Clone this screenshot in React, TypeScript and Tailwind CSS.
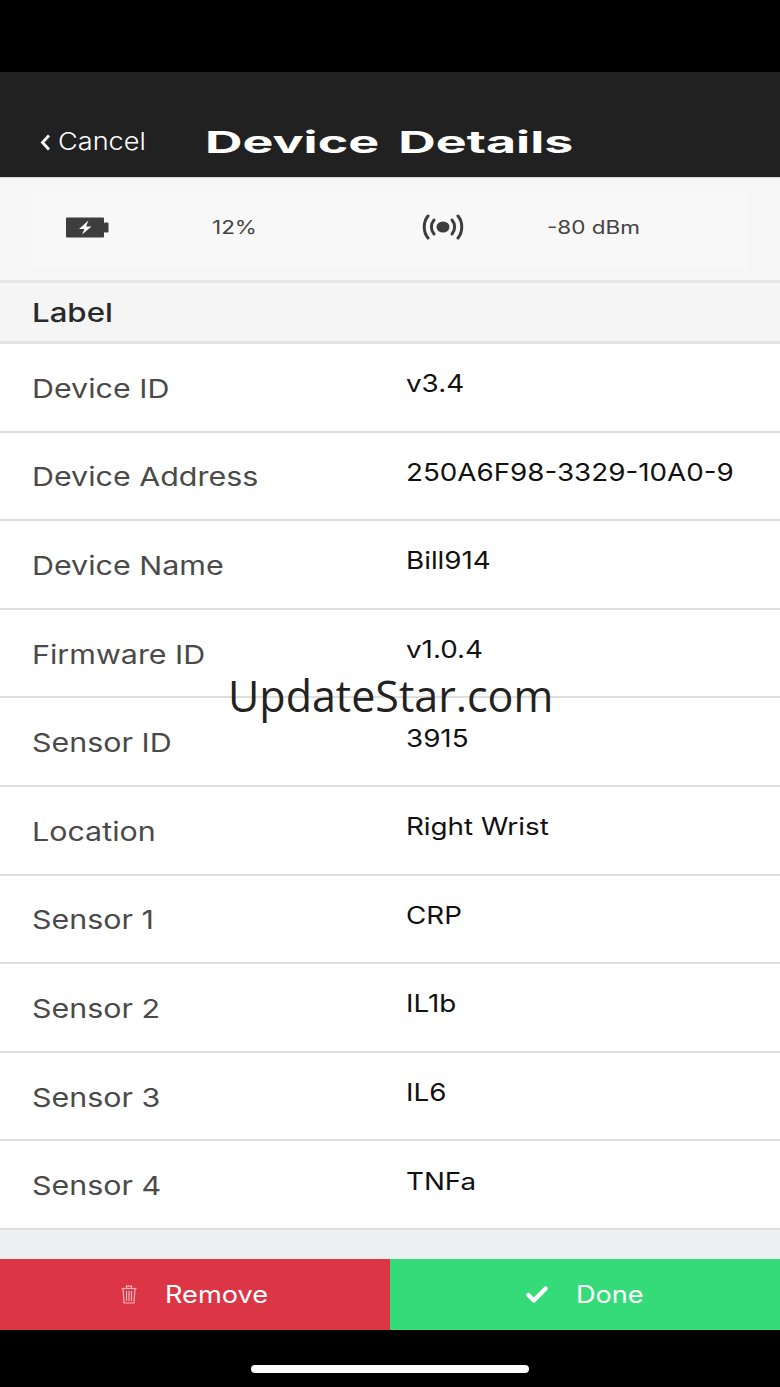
import { Check } from "lucide-react";

const rows = [
  { label: "Device ID", value: "v3.4" },
  { label: "Device Address", value: "250A6F98-3329-10A0-9" },
  { label: "Device Name", value: "Bill914" },
  { label: "Firmware ID", value: "v1.0.4" },
  { label: "Sensor ID", value: "3915" },
  { label: "Location", value: "Right Wrist" },
  { label: "Sensor 1", value: "CRP" },
  { label: "Sensor 2", value: "IL1b" },
  { label: "Sensor 3", value: "IL6" },
  { label: "Sensor 4", value: "TNFa" },
];

function BatteryIcon() {
  return (
    <svg width="43" height="21" viewBox="0 0 43 21">
      <path d="M1 0.5h36a1 1 0 0 1 1 1v18a1 1 0 0 1-1 1H1a1 1 0 0 1-1-1v-18a1 1 0 0 1 1-1z" fill="#3d3d3d" />
      <rect x="38" y="5.5" width="4.5" height="10" rx="1" fill="#3d3d3d" />
      <path d="M22.5 3.5 L13 12 H18.5 L16 17.5 L25.5 9.5 H20 Z" fill="#fff" />
    </svg>
  );
}

function SignalIcon() {
  return (
    <svg width="44" height="26" viewBox="0 0 44 26" fill="none" stroke="#3d3d3d" strokeWidth="3" strokeLinecap="round">
      <ellipse cx="22" cy="13" rx="6.5" ry="5.6" fill="#3d3d3d" stroke="none" />
      <path d="M7 2 C2 8 2 18 7 24" />
      <path d="M13 6 C9.5 10 9.5 16 13 20" />
      <path d="M31 6 C34.5 10 34.5 16 31 20" />
      <path d="M37 2 C42 8 42 18 37 24" />
    </svg>
  );
}

function TrashIcon() {
  return (
    <svg width="16" height="19" viewBox="0 0 16 19" fill="none" stroke="#f7b5bc" strokeWidth="1.2">
      <path d="M0.5 3.5h15" />
      <path d="M5.5 3.5V1.2h5v2.3" />
      <path d="M2 3.5 3 18h10l1-14.5" />
      <path d="M5.5 6v10M8 6v10M10.5 6v10" />
    </svg>
  );
}

export default function App() {
  return (
    <div className="relative flex h-[1387px] w-[780px] flex-col overflow-hidden bg-black font-['Inter',sans-serif]">
      <div className="h-[72px] shrink-0 bg-black" />

      {/* Header */}
      <div className="flex h-[106px] shrink-0 items-end border-b border-[#d8d8d8] bg-[#212121] pb-[19px] pl-[40px]">
        <div className="flex w-[165px] items-center text-white">
          <svg width="11" height="17" viewBox="0 0 11 17" fill="none" stroke="#fff" strokeWidth="2.8">
            <path d="M9 1.5 2.5 8.5 9 15.5" />
          </svg>
          <span className="ml-[7px] inline-block origin-left scale-x-[1.13] text-[24px] leading-8 font-light">Cancel</span>
        </div>
        <span className="inline-block origin-left scale-x-[1.73] text-[30px] leading-[32px] font-bold whitespace-nowrap text-white [word-spacing:4px]">
          Device Details
        </span>
      </div>

      {/* Battery and signal */}
      <div className="flex h-[105px] shrink-0 flex-col border-b-[3px] border-[#e6e6e6] bg-[#f6f6f6] px-[32px] pt-[15px] pb-[11px]">
        <div className="flex flex-1 items-center bg-[#f8f8f8] pb-[8px] pl-[34px] text-[#444]">
          <BatteryIcon />
          <span className="ml-[103px] inline-block w-[209px] origin-left scale-x-[1.25] text-[18px]">12%</span>
          <SignalIcon />
          <span className="ml-[82px] inline-block origin-left scale-x-[1.25] text-[18px]">-80 dBm</span>
        </div>
      </div>

      {/* Section label */}
      <div className="flex h-[61px] shrink-0 items-center border-b-[3px] border-[#e2e2e2] bg-[#f5f5f5] pl-[32px]">
        <span className="inline-block origin-left scale-x-[1.2] text-[26px] font-medium text-[#2a2a2a]">Label</span>
      </div>

      {/* Rows */}
      <div className="bg-white">
        {rows.map((row) => (
          <div key={row.label} className="flex h-[88.6px] items-center border-b-2 border-[#dedede] pl-[32px]">
            <span className="inline-block w-[374px] origin-left scale-x-[1.17] pt-[2px] text-[26px] whitespace-nowrap text-[#4a4a4a]">
              {row.label}
            </span>
            <span className="inline-block origin-left scale-x-[1.157] pb-[6px] text-[24px] whitespace-nowrap text-[#111]">
              {row.value}
            </span>
          </div>
        ))}
      </div>

      <div className="min-h-0 flex-1 bg-[#ecf0f1]" />

      {/* Buttons */}
      <div className="flex h-[71px] shrink-0">
        <div className="flex w-[390px] items-center bg-[#dc3545] pl-[121px]">
          <TrashIcon />
          <span className="ml-[28px] inline-block origin-left scale-x-[1.133] text-[24px] text-white">Remove</span>
        </div>
        <div className="flex w-[390px] items-center bg-[#36db79] pl-[134px]">
          <Check className="h-[26px] w-[26px] text-white" strokeWidth={4} />
          <span className="ml-[26px] inline-block origin-left scale-x-[1.13] text-[24px] text-white">Done</span>
        </div>
      </div>

      {/* Home bar */}
      <div className="flex h-[57px] shrink-0 justify-center bg-black pt-[35px]">
        <div className="h-[8px] w-[278px] rounded-full bg-white" />
      </div>

      {/* Watermark */}
      <div className="absolute top-[667px] left-[228px] font-['Open_Sans',sans-serif] text-[43px] leading-[58px] whitespace-nowrap text-[#222]">
        UpdateStar.com
      </div>
    </div>
  );
}
